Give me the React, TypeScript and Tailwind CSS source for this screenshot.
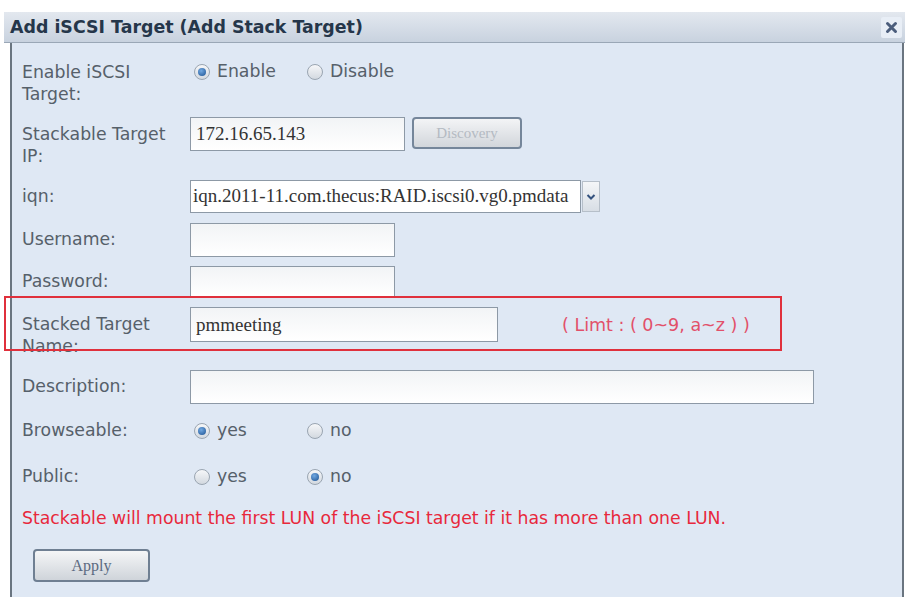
import { useState } from 'react';

const SERIF = "font-['Liberation_Serif',serif]";

function Radio({ checked, label, onClick }: { checked: boolean; label: string; onClick: () => void }) {
  return (
    <button type="button" onClick={onClick} className="flex w-[113px] items-center gap-[7px] text-left">
      <span className="grid h-[16px] w-[16px] shrink-0 place-items-center rounded-full border-[1.5px] border-[#9aa5b1] bg-gradient-to-b from-[#f6f7f9] to-[#d3d9e0]">
        {checked ? (
          <span className="h-[8px] w-[8px] rounded-full bg-[radial-gradient(circle_at_40%_35%,#72a9e2,#1c5292)]" />
        ) : null}
      </span>
      <span>{label}</span>
    </button>
  );
}

function TextBox({ value, className }: { value?: string; className: string }) {
  return (
    <input
      readOnly
      value={value ?? ''}
      className={`${className} ${SERIF} border border-[#8d99a6] bg-gradient-to-b from-[#f2f4f6] to-white px-[5px] text-[19px] text-[#333] outline-none`}
    />
  );
}

export default function App() {
  const [enabled, setEnabled] = useState(true);
  const [browse, setBrowse] = useState(true);
  const [pub, setPub] = useState(false);

  return (
    <div className="h-[604px] w-[909px] overflow-hidden bg-white pt-3 font-['DejaVu_Sans',sans-serif] text-[17.3px] text-[#56606a]">
      <div className="ml-1 mr-[4px] flex h-[585px] flex-col">
        <div className="flex h-[31px] shrink-0 items-center justify-between border-b border-[#9aa7b6] bg-gradient-to-b from-[#e3e8ef] to-[#c8d2df] pl-[6px] pr-[3px]">
          <span className="text-[17.4px] font-bold text-[#25364a]">Add iSCSI Target (Add Stack Target)</span>
          <button
            type="button"
            aria-label="close"
            className="grid h-[21px] w-[21px] place-items-center rounded-[2px] bg-[#e8eef6]"
          >
            <svg width="13" height="13" viewBox="0 0 13 13">
              <path d="M2.5 2.5L10.5 10.5M10.5 2.5L2.5 10.5" stroke="#4b5d7c" strokeWidth="3" strokeLinecap="round" />
            </svg>
          </button>
        </div>

        <div className="ml-[6px] mr-[1px] flex flex-1 flex-col border-x-2 border-[#6a7580] bg-[#dfe8f4] pl-[10px] pt-[12px]">
          <div className="flex h-[34px] items-start">
            <div className="w-[168px] pt-[6px] leading-[22px]">
              Enable iSCSI
              <br />
              Target:
            </div>
            <div className="flex h-[34px] items-center pl-[4px]">
              <Radio checked={enabled} label="Enable" onClick={() => setEnabled(true)} />
              <Radio checked={!enabled} label="Disable" onClick={() => setEnabled(false)} />
            </div>
          </div>

          <div className="mt-[28px] flex h-[34px] items-start">
            <div className="w-[168px] pt-[6px] leading-[22px]">
              Stackable Target
              <br />
              IP:
            </div>
            <TextBox value="172.16.65.143" className="h-[34px] w-[215px]" />
            <button
              type="button"
              disabled
              className={`${SERIF} ml-[7px] h-[32px] w-[110px] rounded-[4px] border-2 border-[#75869a] bg-gradient-to-b from-[#f3f4f6] to-[#d2d6db] text-[15px] text-[#b4bac2]`}
            >
              Discovery
            </button>
          </div>

          <div className="mt-[29px] flex h-[33px] items-center">
            <div className="w-[168px]">iqn:</div>
            <div className={`${SERIF} flex h-[33px] w-[391px] items-center border border-[#8d99a6] bg-white pl-[2px] text-[19px] text-[#333]`}>
              iqn.2011-11.com.thecus:RAID.iscsi0.vg0.pmdata
            </div>
            <div className="ml-[1px] grid h-[31px] w-[18px] place-items-center border border-[#b6bfc9] bg-gradient-to-b from-[#f4f6f8] to-[#d8dee5]">
              <svg width="10" height="8" viewBox="0 0 10 8">
                <path d="M1.5 2L5 5.5L8.5 2" fill="none" stroke="#34527e" strokeWidth="2" />
              </svg>
            </div>
          </div>

          <div className="mt-[10px] flex h-[34px] items-center">
            <div className="w-[168px]">Username:</div>
            <TextBox className="h-[34px] w-[205px]" />
          </div>

          <div className="mt-[9px] flex h-[31px] items-center">
            <div className="w-[168px]">Password:</div>
            <TextBox className="h-[31px] w-[205px]" />
          </div>

          <div className="relative mt-[10px] flex h-[35px] items-start">
            <div className="w-[168px] pt-[6px] leading-[22px]">
              Stacked Target
              <br />
              Name:
            </div>
            <TextBox value="pmmeeting" className="h-[35px] w-[308px]" />
            <span className="ml-[64px] pt-[5px] text-[17.5px] text-[#e2506a]">( Limt : ( 0~9, a~z ) )</span>
            <div className="pointer-events-none absolute left-[-18px] top-[-11px] h-[55px] w-[778px] border-2 border-[#e0303c]" />
          </div>

          <div className="mt-[28px] flex h-[34px] items-center">
            <div className="w-[168px]">Description:</div>
            <TextBox className="h-[34px] w-[624px]" />
          </div>

          <div className="mt-[10px] flex h-[34px] items-center">
            <div className="w-[168px]">Browseable:</div>
            <div className="flex pl-[4px]">
              <Radio checked={browse} label="yes" onClick={() => setBrowse(true)} />
              <Radio checked={!browse} label="no" onClick={() => setBrowse(false)} />
            </div>
          </div>

          <div className="mt-[12px] flex h-[34px] items-center">
            <div className="w-[168px]">Public:</div>
            <div className="flex pl-[4px]">
              <Radio checked={pub} label="yes" onClick={() => setPub(true)} />
              <Radio checked={!pub} label="no" onClick={() => setPub(false)} />
            </div>
          </div>

          <div className="mt-[13px] flex h-[24px] items-center text-[#e8283c]">
            Stackable will mount the first LUN of the iSCSI target if it has more than one LUN.
          </div>

          <div className="mt-[18px]">
            <button
              type="button"
              className={`${SERIF} ml-[11px] h-[33px] w-[117px] rounded-[4px] border-2 border-[#6f7f92] bg-gradient-to-b from-[#f5f6f7] to-[#cfd4da] text-[16px] text-[#5b6a80]`}
            >
              Apply
            </button>
          </div>
        </div>
      </div>
    </div>
  );
}
